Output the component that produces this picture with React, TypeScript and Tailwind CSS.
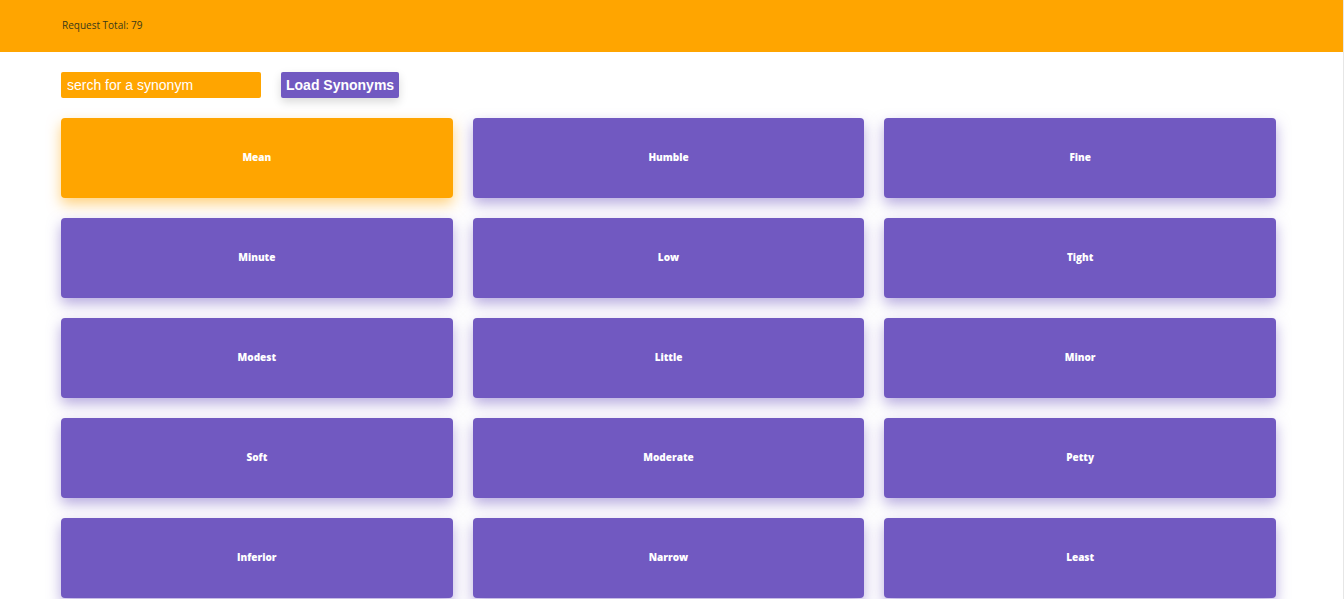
const words = [
  "Mean", "Humble", "Fine",
  "Minute", "Low", "Tight",
  "Modest", "Little", "Minor",
  "Soft", "Moderate", "Petty",
  "Inferior", "Narrow", "Least",
];

export default function App() {
  return (
    <div className="min-h-screen bg-white border-r border-[#e6e6e6] font-['Open_Sans',sans-serif]">
      <header className="h-[52px] bg-[#ffa500] flex items-center px-[62px] pb-[2px]">
        <span className="text-[10px] text-[#3a3a1a] leading-none">Request Total: 79</span>
      </header>

      <div className="px-[61px] pt-5">
        <div className="flex items-center gap-5">
          <input
            className="w-[200px] h-[26px] bg-[#ffa500] rounded-[2px] px-[6px] text-[14px] text-white placeholder:text-white outline-none font-['Liberation_Sans',Arial,sans-serif]"
            placeholder="serch for a synonym"
          />
          <button className="h-[26px] px-[5px] bg-[#7159c1] rounded-[2px] text-[14px] font-bold text-white shadow-[0_4px_10px_rgba(0,0,0,0.15)] font-['Liberation_Sans',Arial,sans-serif]">
            Load Synonyms
          </button>
        </div>

        <div className="mt-5 w-[1215px] grid grid-cols-3 gap-5">
          {words.map((w, i) => (
            <div
              key={w}
              className={
                i === 0
                  ? "h-20 rounded-[4px] bg-[#ffa500] flex items-center justify-center pb-[2px] shadow-[0_6px_14px_rgba(255,165,0,0.5)]"
                  : "h-20 rounded-[4px] bg-[#7159c1] flex items-center justify-center pb-[2px] shadow-[0_6px_14px_rgba(113,89,193,0.5)]"
              }
            >
              <span className="text-[10px] font-extrabold text-white">{w}</span>
            </div>
          ))}
        </div>
      </div>
    </div>
  );
}
